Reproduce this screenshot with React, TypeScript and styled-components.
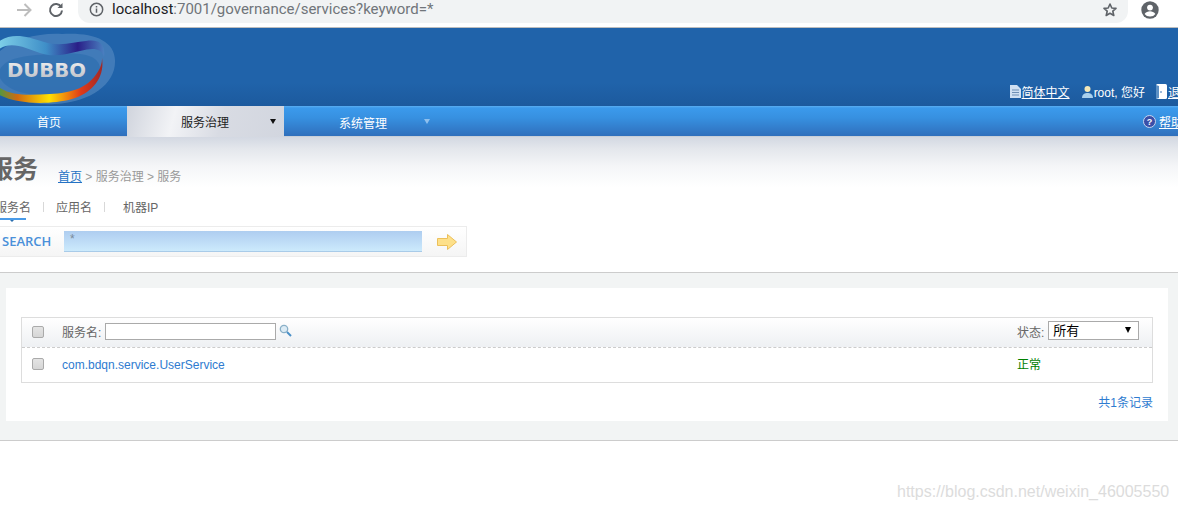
import React from "react";
import styled, { createGlobalStyle } from "styled-components";

const Global = createGlobalStyle`
  html, body { margin: 0; padding: 0; background: #fff; overflow: hidden; }
  body { font: 12px "Liberation Sans", "Noto Sans CJK SC", sans-serif; color: #666; }
`;

const Page = styled.div`
  position: relative;
  width: 1178px;
  height: 510px;
  overflow: hidden;
`;

const Chrome = styled.div`
  height: 27px;
  border-bottom: 1px solid #bdbdbd;
  display: flex;
  align-items: flex-start;
  background: #fff;
`;
const ChromeBtn = styled.div`
  width: 24px;
  height: 20px;
  margin-left: ${(p: { $ml: number }) => p.$ml}px;
  display: flex;
  align-items: center;
  justify-content: center;
`;
const UrlPill = styled.div`
  margin-left: 10px;
  width: 1050px;
  height: 23px;
  background: #f1f3f4;
  border-radius: 0 0 12px 12px;
  display: flex;
  align-items: center;
  padding: 0 8px 0 11px;
  box-sizing: border-box;
  font: 15px "Roboto", "Liberation Sans", sans-serif;
  color: #70757a;
`;
const UrlText = styled.span`
  margin-left: 8px;
  flex: 1;
  padding-bottom: 6px;
  b { font-weight: 400; color: #202124; }
`;

const Header = styled.div`
  height: 78px;
  background: linear-gradient(#2063aa 0%, #2063aa 70%, #1c5a9e 100%);
  display: flex;
  justify-content: space-between;
  align-items: flex-end;
  overflow: hidden;
`;
const Logo = styled.svg`
  width: 116px;
  height: 78px;
  flex: none;
`;
const UserBar = styled.div`
  display: flex;
  align-items: center;
  height: 18px;
  margin: 0 -14px 6px 0;
  color: #fff;
  font-size: 12px;
`;
const UserItem = styled.span`
  display: flex;
  align-items: center;
  gap: 1px;
  margin-left: ${(p: { $ml: number }) => p.$ml}px;
`;
const WhiteLink = styled.a`
  color: #fff;
  text-decoration: underline;
`;

const Nav = styled.div`
  height: 30px;
  background: linear-gradient(#5aaef2 0, #3b9aec 2px, #3790e0 40%, #2f6fbc 100%);
  display: flex;
  align-items: stretch;
  color: #fff;
  border-bottom: 1px solid #c8ced8;
`;
const NavItem = styled.div<{ $w: number; $active?: boolean; $pl: number; $dy?: number }>`
  position: relative;
  width: ${(p) => p.$w}px;
  box-sizing: border-box;
  padding: ${(p) => p.$dy ?? 0}px 0 0 ${(p) => p.$pl}px;
  display: flex;
  align-items: center;
  font-size: 12px;
  color: ${(p) => (p.$active ? "#222" : "#fff")};
  background: ${(p) =>
    p.$active ? "linear-gradient(105deg, #d0d4dd 0%, #f2f3f6 30%, #d8dbe3 60%, #d2d6df 100%)" : "transparent"};
  margin-bottom: ${(p) => (p.$active ? "-1px" : "0")};
`;
const NavArrow = styled.i<{ $c: string; $l: number }>`
  position: absolute;
  left: ${(p) => p.$l}px;
  top: 13px;
  width: 0;
  height: 0;
  border-left: 3.5px solid transparent;
  border-right: 3.5px solid transparent;
  border-top: 5px solid ${(p) => p.$c};
`;
const NavHelp = styled.div`
  margin-left: auto;
  margin-right: -5px;
  display: flex;
  align-items: center;
  gap: 3px;
`;

const TitleZone = styled.div`
  height: 72px;
  background: linear-gradient(#d3d8e2 0, #e4e7ec 12px, #f5f6f8 30px, #fff 50px);
  padding-top: 17px;
  box-sizing: border-box;
  display: flex;
  align-items: flex-start;
`;
const Title = styled.h1`
  margin: 0 0 0 -12px;
  font-size: 25px;
  line-height: 30px;
  font-weight: 700;
  color: #666;
  width: 70px;
`;
const Crumb = styled.div`
  margin-top: 13px;
  color: #999;
  font-size: 12px;
  a { color: #2472c4; text-decoration: underline; }
`;

const Tabs = styled.div`
  height: 23px;
  margin-top: -10px;
  margin-bottom: -1px;
  display: flex;
  align-items: flex-start;
  position: relative;
  color: #666;
`;
const Tab = styled.span<{ $ml: number }>`
  margin-left: ${(p) => p.$ml}px;
  line-height: 18px;
  white-space: nowrap;
`;
const Sep = styled.span<{ $ml: number }>`
  margin: 3px 0 0 ${(p) => p.$ml}px;
  width: 1px;
  height: 10px;
  background: #d8d8d8;
`;
const TabLine = styled.i`
  position: absolute;
  left: 0;
  top: 19px;
  width: 26px;
  height: 2px;
  background: #4a9be8;
  &::after {
    content: "";
    position: absolute;
    left: 10px;
    top: 2px;
    border-left: 2px solid transparent;
    border-right: 2px solid transparent;
    border-top: 2px solid #2a6fb0;
  }
`;

const SearchBox = styled.div`
  margin: 5px 0 0 -2px;
  width: 469px;
  height: 31px;
  box-sizing: border-box;
  border: 1px solid #ececec;
  background: linear-gradient(#fff, #f5f5f5);
  display: flex;
  align-items: center;
`;
const SearchLabel = styled.span`
  margin: -2px 0 0 3px;
  width: 62px;
  flex: none;
  font: 600 13px "Open Sans", "Liberation Sans", sans-serif;
  color: #4a90d9;
`;
const SearchInput = styled.div`
  width: 358px;
  height: 21px;
  box-sizing: border-box;
  padding: 1px 6px;
  background: linear-gradient(#aecdf0, #cceafc);
  border-bottom: 1px solid #a9cbe8;
  color: #7a8a99;
  font-size: 12px;
`;
const GoArrow = styled.svg`
  margin-left: 15px;
  width: 20px;
  height: 16px;
`;

const Band = styled.div`
  margin-top: 15px;
  height: 169px;
  box-sizing: border-box;
  background: #f2f4f4;
  border-top: 1px solid #ccc;
  border-bottom: 1px solid #ccc;
  padding: 15px 10px 0 6px;
`;
const Panel = styled.div`
  height: 133px;
  background: #fff;
  padding: 29px 15px 0;
  box-sizing: border-box;
`;
const Table = styled.div`
  border: 1px solid #ddd;
  height: 66px;
  box-sizing: border-box;
`;
const HeadRow = styled.div`
  height: 30px;
  box-sizing: border-box;
  border-bottom: 1px dashed #ccc;
  background: linear-gradient(#fff, #eef0f3);
  display: flex;
  align-items: center;
  padding: 0 13px 2px 10px;
`;
const BodyRow = styled.div`
  height: 34px;
  display: flex;
  align-items: center;
  padding: 0 13px 0 10px;
`;
const Check = styled.i<{ $up?: number }>`
  width: 12px;
  height: 12px;
  flex: none;
  box-sizing: border-box;
  border: 1px solid #aaa;
  border-radius: 2px;
  background: linear-gradient(#e4e4e4, #d6d6d6);
  margin-right: 18px;
  margin-top: ${(p) => -(p.$up ?? 0)}px;
`;
const FilterLabel = styled.span`
  color: #666;
  margin-right: 4px;
`;
const FilterInput = styled.input`
  width: 171px;
  height: 17px;
  box-sizing: border-box;
  border: 1px solid #aaa;
  padding: 0;
  background: #fff;
  outline: none;
  margin: 0;
`;
const Spacer = styled.span`
  flex: 1;
`;
const StatusCell = styled.span`
  width: 122px;
  flex: none;
  color: #666;
  display: flex;
  align-items: center;
  gap: 4px;
  white-space: nowrap;
`;
const SelectBox = styled.div`
  position: relative;
  width: 91px;
  height: 19px;
  box-sizing: border-box;
  border: 1px solid #aaa;
  color: #000;
  font-size: 13px;
  line-height: 18px;
  padding-left: 4px;
  background: #fff;
  margin-top: -3px;
  &::after {
    content: "";
    position: absolute;
    right: 7px;
    top: 5px;
    border-left: 3.5px solid transparent;
    border-right: 3.5px solid transparent;
    border-top: 6px solid #000;
  }
`;
const ServiceLink = styled.a`
  color: #2e7bd0;
  font-size: 12px;
`;
const StatusOk = styled.span`
  width: 122px;
  flex: none;
  color: #008000;
  margin-top: -3px;
`;
const Pager = styled.div`
  text-align: right;
  margin-top: 10px;
  color: #2e7bd0;
`;
const Watermark = styled.div`
  position: absolute;
  left: 897px;
  top: 483px;
  font: 16px "Liberation Sans", sans-serif;
  color: #dcdcdc;
  white-space: nowrap;
`;

export default function App() {
  return (
    <Page>
      <Global />
      <Chrome>
        <ChromeBtn $ml={12}>
          <svg width="16" height="16" viewBox="0 0 16 16" fill="none" stroke="#bdbdbd" strokeWidth="2">
            <path d="M1 8h13M8.5 2l6 6-6 6" />
          </svg>
        </ChromeBtn>
        <ChromeBtn $ml={8}>
          <svg width="16" height="16" viewBox="0 0 16 16" fill="none" stroke="#5f6368" strokeWidth="2">
            <path d="M13.2 5A6 6 0 1 0 14 8.5" />
            <path d="M14.5 1v5h-5z" fill="#5f6368" stroke="none" />
          </svg>
        </ChromeBtn>
        <UrlPill>
          <svg width="15" height="15" viewBox="0 0 16 16" style={{ marginBottom: 4 }}>
            <circle cx="8" cy="8" r="6.6" fill="none" stroke="#5f6368" strokeWidth="1.6" />
            <path d="M7.2 7h1.6v4.5H7.2zM7.2 4.2h1.6v1.6H7.2z" fill="#5f6368" />
          </svg>
          <UrlText>
            <b>localhost</b>:7001/governance/services?keyword=*
          </UrlText>
          <svg width="16" height="16" viewBox="0 0 24 24" fill="none" stroke="#5f6368" strokeWidth="2.4" style={{ marginBottom: 4, marginRight: 2 }}>
            <path d="M12 3l2.7 6 6.3.6-4.8 4.2 1.5 6.4L12 16.8l-5.7 3.4 1.5-6.4L3 9.6 9.3 9z" strokeLinejoin="round" />
          </svg>
        </UrlPill>
        <ChromeBtn $ml={10}>
          <svg width="18" height="18" viewBox="0 0 18 18">
            <circle cx="9" cy="9" r="8.7" fill="#5f6368" />
            <circle cx="9" cy="6.6" r="2.9" fill="#fff" />
            <path d="M3.6 13c1.2-2 3.4-2.8 5.4-2.8s4.2.8 5.4 2.8A6.6 6.6 0 0 1 9 15.6 6.6 6.6 0 0 1 3.6 13z" fill="#fff" />
          </svg>
        </ChromeBtn>
      </Chrome>

      <Header>
        <Logo viewBox="0 0 116 78">
          <defs>
            <linearGradient id="top" x1="0" x2="1" y1="0" y2="0">
              <stop offset="0" stopColor="#7fd0e8" />
              <stop offset="0.45" stopColor="#3f8fc8" />
              <stop offset="0.75" stopColor="#2a1f88" />
              <stop offset="1" stopColor="#4a80c0" />
            </linearGradient>
            <linearGradient id="bot" x1="0" x2="1" y1="0" y2="0">
              <stop offset="0" stopColor="#3aa04a" />
              <stop offset="0.2" stopColor="#d06a10" />
              <stop offset="0.5" stopColor="#ffe000" />
              <stop offset="0.8" stopColor="#e03a18" />
              <stop offset="1" stopColor="#a02828" />
            </linearGradient>
            <linearGradient id="letters" x1="0" x2="0" y1="0" y2="1">
              <stop offset="0" stopColor="#f2f2f2" />
              <stop offset="1" stopColor="#b8bcc4" />
            </linearGradient>
          </defs>
          <path d="M-10 40C-8 18 30 4 62 6c30-2 54 6 53 28 0 22-24 40-60 42C20 78-12 62-10 40z" fill="#5d90c4" opacity="0.55" />
          <path d="M-2 45C4 30 20 28 50 26c30-2 48 0 50 14 0 14-20 26-50 27C20 68 2 60-2 45z" fill="#2f6fb0" opacity="0.75" />
          <path d="M-2 14C12 4 26 8 44 14c16 5 30 0 42-1 12-2 20 2 18 16-3-10-12-9-24-6-14 3-26 7-40 2C26 20 10 12-2 22z" fill="url(#top)" />
          <path d="M-4 57C10 69 30 67 50 66c22-1 40-6 50-26 2-5 2-8 2-10 3 20-10 35-30 41-22 6-58 6-76-6z" fill="url(#bot)" />
          <text x="7" y="49" fontFamily="DejaVu Sans" fontWeight="700" fontSize="19" fill="url(#letters)" textLength="79" lengthAdjust="spacingAndGlyphs">DUBBO</text>
        </Logo>
        <UserBar>
          <UserItem $ml={0}>
            <svg width="11" height="13" viewBox="0 0 11 13">
              <path d="M0 0h7l4 4v9H0z" fill="#cfe0f2" />
              <path d="M2 5h7M2 7.5h7M2 10h7" stroke="#6d8fb5" />
            </svg>
            <WhiteLink>简体中文</WhiteLink>
          </UserItem>
          <UserItem $ml={12}>
            <svg width="11" height="13" viewBox="0 0 11 13">
              <circle cx="5.5" cy="4" r="3" fill="#f4e8b8" />
              <path d="M0 13c0-4 3-5 5.5-5S11 9 11 13z" fill="#a8d0ee" />
            </svg>
            root, 您好
          </UserItem>
          <UserItem $ml={11}>
            <svg width="11" height="15" viewBox="0 0 11 15">
              <rect x="0" y="0" width="11" height="15" rx="1.5" fill="#fff" />
              <path d="M0 1l3 1v12l-3 1z" fill="#5d90c4" />
              <circle cx="5" cy="8" r="0.8" fill="#2063aa" />
            </svg>
            <WhiteLink>退出</WhiteLink>
          </UserItem>
        </UserBar>
      </Header>

      <Nav>
        <NavItem $w={127} $pl={37}>首页</NavItem>
        <NavItem $w={157} $active $pl={54}>
          服务治理
          <NavArrow $c="#111" $l={143} />
        </NavItem>
        <NavItem $w={157} $pl={55} $dy={3}>
          系统管理
          <NavArrow $c="#8fc0ee" $l={140} />
        </NavItem>
        <NavHelp>
          <svg width="13" height="13" viewBox="0 0 13 13">
            <circle cx="6.5" cy="6.5" r="6" fill="#3a4fa8" stroke="#c8d4ee" />
            <text x="6.5" y="10" textAnchor="middle" fontSize="9" fontFamily="Liberation Sans" fontWeight="700" fill="#fff">?</text>
          </svg>
          <WhiteLink>帮助</WhiteLink>
        </NavHelp>
      </Nav>

      <TitleZone>
        <Title>服务</Title>
        <Crumb>
          <a>首页</a> &gt; 服务治理 &gt; 服务
        </Crumb>
      </TitleZone>

      <Tabs>
        <Tab $ml={-5}>服务名</Tab>
        <Sep $ml={12} />
        <Tab $ml={12}>应用名</Tab>
        <Sep $ml={12} />
        <Tab $ml={18}>机器IP</Tab>
        <TabLine />
      </Tabs>

      <SearchBox>
        <SearchLabel>SEARCH</SearchLabel>
        <SearchInput>*</SearchInput>
        <GoArrow viewBox="0 0 20 16">
          <path d="M0.5 4.5h10V0.5l9 7.5-9 7.5v-4h-10z" fill="#fde08a" stroke="#ecc05a" />
        </GoArrow>
      </SearchBox>

      <Band>
        <Panel>
          <Table>
            <HeadRow>
              <Check />
              <FilterLabel>服务名:</FilterLabel>
              <FilterInput readOnly />
              <svg width="13" height="13" viewBox="0 0 13 13" style={{ marginLeft: 3, marginTop: -3 }}>
                <circle cx="5" cy="5" r="3.7" fill="#dcebf5" stroke="#8ab0c8" strokeWidth="1.3" />
                <path d="M8 8l4 4" stroke="#4a90c8" strokeWidth="2" />
              </svg>
              <Spacer />
              <StatusCell>
                状态:
                <SelectBox>所有</SelectBox>
              </StatusCell>
            </HeadRow>
            <BodyRow>
              <Check $up={2} />
              <ServiceLink>com.bdqn.service.UserService</ServiceLink>
              <Spacer />
              <StatusOk>正常</StatusOk>
            </BodyRow>
          </Table>
          <Pager>共1条记录</Pager>
        </Panel>
      </Band>

      <Watermark>https://blog.csdn.net/weixin_46005550</Watermark>
    </Page>
  );
}
